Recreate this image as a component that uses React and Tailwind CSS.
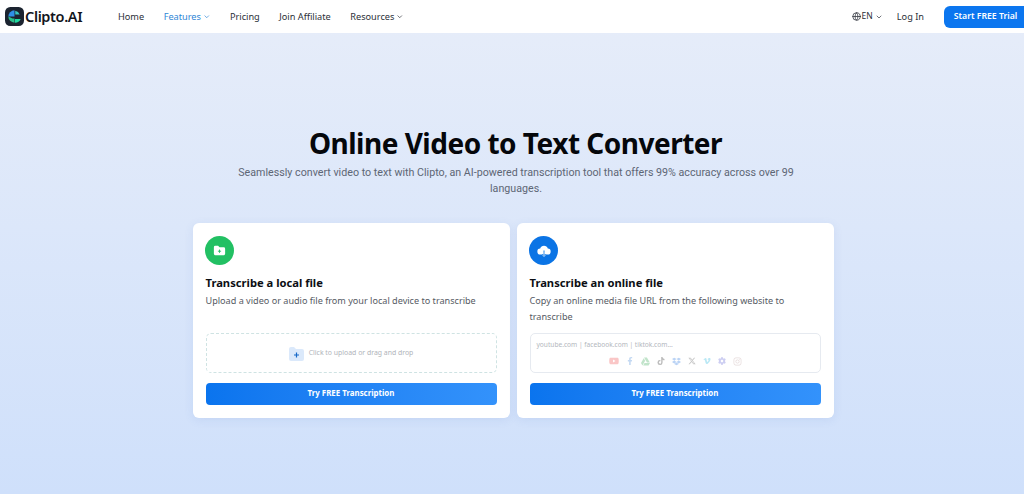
import React from "react";
import { ChevronDown, Globe } from "lucide-react";
import { FaYoutube, FaFacebookF, FaGoogleDrive, FaTiktok, FaDropbox, FaVimeoV, FaInstagram, FaCog } from "react-icons/fa";
import { FaXTwitter } from "react-icons/fa6";

function Logo() {
  return (
    <svg width="19" height="19" viewBox="0 0 20 20" className="shrink-0">
      <rect width="20" height="20" rx="5.5" fill="#1c2430" />
      <path d="M10 3.500a6.500 6.500 0 0 0-6.500 6.500H10z" fill="#2f8fe8" />
      <path d="M3.500 10a6.500 6.500 0 0 0 6.500 6.500V12H8z" fill="#2bbf8a" />
      <path d="M10.500 12.500h6a6.500 6.500 0 0 1-6 4z" fill="#1ed9a0" />
      <path d="M10.800 4a6.500 6.500 0 0 1 4.700 4h-4.700z" fill="#38c6c0" />
    </svg>
  );
}

function NavItem({ children, chevron, active }) {
  return (
    <a className={`flex items-center gap-[2px] text-[9.2px] ${active ? "text-[#2f86d6]" : "text-[#2b2f38]"}`}>
      {children}
      {chevron && <ChevronDown size={7.5} strokeWidth={2.2} />}
    </a>
  );
}

function CtaButton() {
  return (
    <button className="mt-[10px] h-[22px] w-full rounded-[4px] bg-gradient-to-r from-[#0a74ee] to-[#3392fb] text-[7.9px] font-bold text-white">
      Try FREE Transcription
    </button>
  );
}

function Card({ icon, iconBg, title, desc, children }) {
  return (
    <section className="flex h-[195px] w-[317px] flex-col rounded-[6px] bg-white px-[13px] pt-[13px] pb-[13px] shadow-[0_2px_10px_rgba(70,110,190,0.10)]">
      <div className={`-ml-[0.5px] flex h-[29px] w-[29px] items-center justify-center rounded-full ${iconBg}`}>{icon}</div>
      <h2 className="mt-[9px] text-[11.2px] leading-[17px] font-bold text-[#0c0f14]">{title}</h2>
      <p className="mt-[2px] h-[32px] text-[9.1px] leading-[16px] text-[#555a63]">{desc}</p>
      <div className="flex-1" />
      {children}
      <CtaButton />
    </section>
  );
}

export default function App() {
  const brands = [
    [FaYoutube, "text-[#ef4444]", 10],
    [FaFacebookF, "text-[#3b82d6]", 8],
    [FaGoogleDrive, "text-[#34a853]", 9],
    [FaTiktok, "text-[#222222]", 8],
    [FaDropbox, "text-[#1d6fe0]", 9],
    [FaXTwitter, "text-[#444444]", 8],
    [FaVimeoV, "text-[#1fb6e0]", 8],
    [FaCog, "text-[#5b5fd6]", 8],
    [FaInstagram, "text-[#b08a8a]", 9],
  ];
  return (
    <div className="flex h-[494px] w-[1024px] flex-col overflow-hidden bg-gradient-to-b from-[#e7edf9] to-[#cfe0fb] font-['Noto_Sans',sans-serif]">
      <header className="flex h-[33px] shrink-0 items-center justify-between bg-white pl-[5px]">
        <div className="flex items-center">
          <div className="flex w-[113px] items-center gap-[1px]">
            <Logo />
            <span className="text-[14.500px] font-semibold tracking-tight text-[#12161c]">Clipto.AI</span>
          </div>
          <nav className="flex items-center gap-[19.5px]">
            <NavItem>Home</NavItem>
            <NavItem chevron active>Features</NavItem>
            <NavItem>Pricing</NavItem>
            <NavItem>Join Affiliate</NavItem>
            <NavItem chevron>Resources</NavItem>
          </nav>
        </div>
        <div className="flex items-center">
          <div className="flex items-center gap-[1px] text-[8.500px] text-[#2b2f38]">
            <Globe size={9} />
            <span>EN</span>
            <ChevronDown size={8} className="ml-[1px]" />
          </div>
          <span className="ml-[14px] text-[9.200px] text-[#2b2f38]">Log In</span>
          <button className="ml-[20px] h-[22px] w-[80px] rounded-l-[6px] bg-[#0b76ef] pl-[3px] text-[8.700px] font-semibold text-white">
            Start FREE Trial
          </button>
        </div>
      </header>

      <main className="flex flex-col items-center">
        <h1 className="mt-[92px] ml-[7px] text-[28px] leading-[36px] font-bold tracking-[-0.5px] text-[#05070b]">Online Video to Text Converter</h1>
        <p className="mt-[4px] ml-[8px] w-[570px] text-center font-['Roboto',sans-serif] text-[10.7px] leading-[16px] text-[#5d6675]">
          Seamlessly convert video to text with Clipto, an AI-powered transcription tool that offers 99% accuracy across over 99 languages.
        </p>
        <div className="mt-[26px] ml-[2px] flex gap-[7px]">
          <Card
            iconBg="bg-[#22c063]"
            title="Transcribe a local file"
            desc="Upload a video or audio file from your local device to transcribe"
            icon={
              <svg width="15" height="15" viewBox="0 0 16 16">
                <path d="M2 4.500A1.500 1.500 0 0 1 3.500 3h3L8 4.500h4.500A1.500 1.500 0 0 1 14 6v5.500a1.500 1.500 0 0 1-1.500 1.500h-9A1.500 1.500 0 0 1 2 11.500z" fill="#fff" />
                <path d="M8 7v3.500M6.300 8.750h3.400" stroke="#22c063" strokeWidth="1" />
              </svg>
            }
          >
            <div className="flex h-[40px] items-center justify-center gap-[5px] rounded-[5px] border border-dashed border-[#cfe3e3]">
              <svg width="15" height="15" viewBox="0 0 15 15">
                <path d="M0 3a2 2 0 0 1 2-2h3l2 2h6a2 2 0 0 1 2 2v8a2 2 0 0 1-2 2H2a2 2 0 0 1-2-2z" fill="#dbe9fb" />
                <path d="M7.500 6.500v5M5 9h5" stroke="#1668c8" strokeWidth="1.200" />
              </svg>
              <span className="text-[6.900px] text-[#b0b4ba]">Click to upload or drag and drop</span>
            </div>
          </Card>
          <Card
            iconBg="bg-[#0b74e5]"
            title="Transcribe an online file"
            desc="Copy an online media file URL from the following website to transcribe"
            icon={
              <svg width="16" height="16" viewBox="0 0 16 16">
                <path d="M4.500 11.500a3 3 0 0 1-.3-6A4 4 0 0 1 11.800 5.500a3 3 0 0 1-.3 6z" fill="#fff" />
                <path d="M8 7.500v5.500M6.300 11.500 8 13.200l1.700-1.700" stroke="#0b74e5" strokeWidth="1" fill="none" />
                <path d="M8 8.500v5M6.500 12 8 13.500 9.500 12" stroke="#bcd9f7" strokeWidth="0.800" fill="none" />
              </svg>
            }
          >
            <div className="flex h-[40px] flex-col rounded-[5px] border border-[#e6eaf0] px-[6px] pt-[4px]">
              <span className="text-[6.600px] leading-[13px] text-[#b3b7bd]">youtube.com | facebook.com | tiktok.com...</span>
              <div className="mt-[5px] flex items-center justify-center gap-[7px] opacity-30">
                {brands.map(([I, c, s], i) => (
                  <I key={i} size={s} className={c} />
                ))}
              </div>
            </div>
          </Card>
        </div>
      </main>
    </div>
  );
}
